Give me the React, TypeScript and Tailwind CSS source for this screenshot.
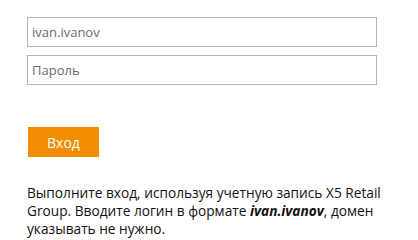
export default function App() {
  return (
    <div className="min-h-screen bg-white pt-[17px] pl-[27px] font-['Open_Sans',sans-serif] overflow-hidden">
      <div className="flex w-[350px] flex-col gap-[8px]">
        <input
          type="text"
          placeholder="ivan.ivanov"
          className="h-[30px] w-full border border-[#b4b4b4] bg-white px-[4px] text-[13px] text-[#333] outline-none placeholder:text-[#6b6b6b]"
        />
        <input
          type="password"
          placeholder="Пароль"
          className="h-[30px] w-full border border-[#b4b4b4] bg-white px-[4px] text-[13px] text-[#333] outline-none placeholder:text-[#6b6b6b]"
        />
      </div>

      <button className="ml-px mt-[42px] h-[30px] w-[71px] bg-[#f28c00] text-[14px] text-white">
        Вход
      </button>

      <p className="mt-[27px] w-[390px] text-[13.7px] leading-[18px] text-[#111]">
        Выполните вход, используя учетную запись X5 Retail Group. Вводите
        логин в формате <b className="italic font-bold">ivan.ivanov</b>, домен
        указывать не нужно.
      </p>
    </div>
  );
}
